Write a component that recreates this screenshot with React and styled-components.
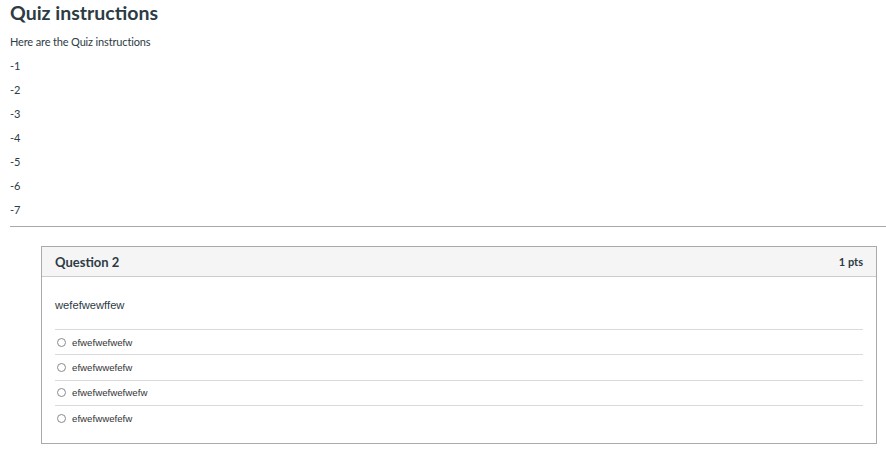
import React from "react";
import styled, { createGlobalStyle } from "styled-components";

const Global = createGlobalStyle`
  html, body { margin: 0; padding: 0; background: #fff; }
  body { font-family: Lato, "Noto Sans", sans-serif; color: #2d3b45; }
`;

const Page = styled.div`
  padding-left: 10px;
`;

const Title = styled.h2`
  margin: 0;
  font-size: 19.5px;
  line-height: 26px;
  font-weight: 700;
  color: #2d3b45;
`;

const Para = styled.p`
  margin: ${(p) => (p.$first ? "7px" : "6px")} 0 0;
  font-size: 11px;
  letter-spacing: -0.15px;
  line-height: 18px;
  color: #2d3b45;
`;

const Rule = styled.hr`
  margin: 7px 0 0;
  border: 0;
  border-top: 1px solid #a9a9a9;
  height: 0;
`;

const QuestionBox = styled.div`
  margin: 19px 9px 0 31px;
  border: 1px solid #aaa;
`;

const Header = styled.div`
  display: flex;
  justify-content: space-between;
  align-items: center;
  height: 29px;
  padding: 0 13px;
  background: #f5f5f5;
  border-bottom: 1px solid #c7cdd1;
`;

const QTitle = styled.span`
  font-size: 13px;
  font-weight: 700;
  color: #2d3b45;
`;

const Points = styled.span`
  font-size: 11px;
  font-weight: 700;
  color: #2d3b45;
`;

const Body = styled.div`
  padding: 0 13px 12px;
`;

const QText = styled.div`
  font-family: "Liberation Sans", Arial, sans-serif;
  font-size: 11.2px;
  line-height: 16px;
  padding: 20px 0 16px;
  color: #2d3b45;
`;

const Answer = styled.label`
  display: flex;
  align-items: center;
  height: 24.4px;
  border-top: 1px solid #dadada;
  padding-left: 2px;
  font-family: "Liberation Sans", Arial, sans-serif;
  font-size: 9.7px;
  color: #333;
`;

const Radio = styled.span`
  width: 7px;
  height: 7px;
  border: 1px solid #8a8a8a;
  border-radius: 50%;
  margin-right: 6px;
  box-sizing: content-box;
`;

const answers = ["efwefwefwefw", "efwefwwefefw", "efwefwefwefwefw", "efwefwwefefw"];

export default function App() {
  return (
    <>
      <Global />
      <Page>
        <Title>Quiz instructions</Title>
        <Para $first>Here are the Quiz instructions</Para>
        {[1, 2, 3, 4, 5, 6, 7].map((n) => (
          <Para key={n}>-{n}</Para>
        ))}
        <Rule />
        <QuestionBox>
          <Header>
            <QTitle>Question 2</QTitle>
            <Points>1 pts</Points>
          </Header>
          <Body>
            <QText>wefefwewffew</QText>
            {answers.map((a, i) => (
              <Answer key={i}>
                <Radio />
                {a}
              </Answer>
            ))}
          </Body>
        </QuestionBox>
      </Page>
    </>
  );
}
